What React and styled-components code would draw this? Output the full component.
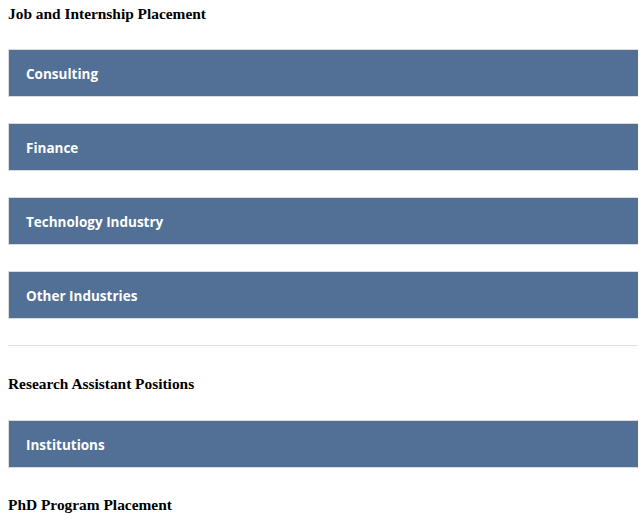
import styled, { createGlobalStyle } from "styled-components";

const GlobalStyle = createGlobalStyle`
  body {
    margin: 8px 1px 8px 8px;
    background: #ffffff;
  }
`;

const Page = styled.div`
  display: flex;
  flex-direction: column;
`;

const SectionTitle = styled.h4`
  font-family: "Liberation Serif", "Times New Roman", serif;
  font-weight: 700;
  font-size: 15.4px;
  line-height: 17px;
  color: #000000;
  margin: ${(props) => props.$margin || "0"};
`;

const Bar = styled.div`
  box-sizing: border-box;
  height: 48px;
  display: flex;
  align-items: center;
  padding: 1px 0 0 17px;
  background-color: #527096;
  border: 1px solid #dcdcdc;
  border-right: none;
  margin-bottom: ${(props) => (props.$last ? "0" : "26px")};
`;

const BarLabel = styled.span`
  font-family: "Open Sans", "Liberation Sans", sans-serif;
  font-weight: 700;
  font-size: 13.5px;
  color: #ffffff;
`;

const Divider = styled.hr`
  border: none;
  border-top: 1px solid #e2e2e2;
  margin: 26px 0 0;
`;

const industries = ["Consulting", "Finance", "Technology Industry", "Other Industries"];

const App = () => (
  <Page>
    <GlobalStyle />
    <SectionTitle $margin="-3px 0 27px">Job and Internship Placement</SectionTitle>
    {industries.map((name, i) => (
      <Bar key={name} $last={i === industries.length - 1}>
        <BarLabel>{name}</BarLabel>
      </Bar>
    ))}
    <Divider />
    <SectionTitle $margin="29px 0 28px">Research Assistant Positions</SectionTitle>
    <Bar $last>
      <BarLabel>Institutions</BarLabel>
    </Bar>
    <SectionTitle $margin="28px 0 0">PhD Program Placement</SectionTitle>
  </Page>
);

export default App;
